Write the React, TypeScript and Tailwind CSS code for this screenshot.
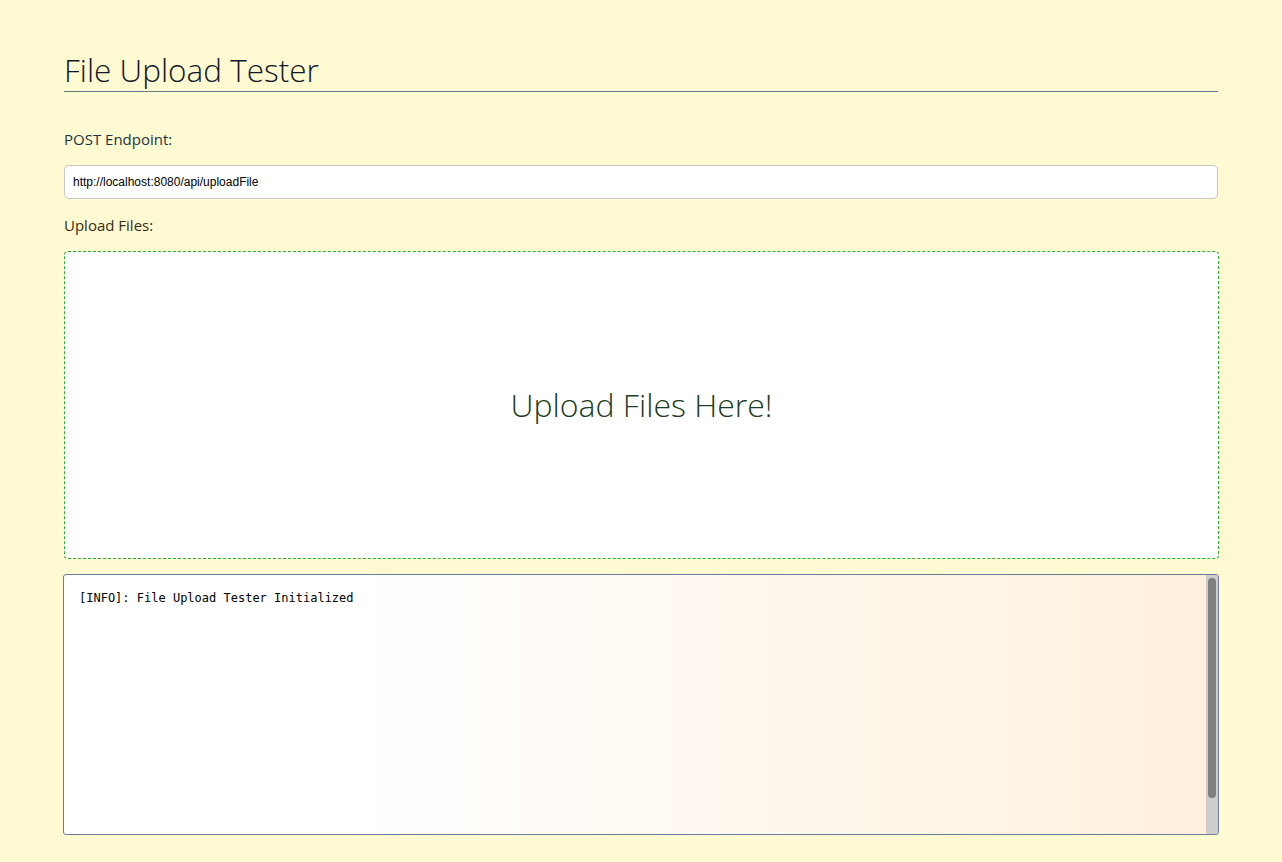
export default function App() {
  return (
    <div className="min-h-[862px] bg-[#fffad2] px-16 pt-[50px] pb-7 font-['Open_Sans',sans-serif]">
      <h1 className="border-b border-[#6b7280] pb-[1px] text-[31.5px] font-light leading-[40px] text-[#111827]">
        File Upload Tester
      </h1>

      <label className="mt-[37px] block text-[15px] leading-5 text-[#1c3442]">
        POST Endpoint:
      </label>
      <input
        className="mt-[16px] block h-[34px] w-full rounded-[5px] border border-[#c8c8c8] bg-white px-[8px] font-['Liberation_Sans',sans-serif] text-[12px] text-black outline-none"
        defaultValue="http://localhost:8080/api/uploadFile"
      />

      <label className="mt-[16px] block text-[15px] leading-5 text-[#3a2a14]">
        Upload Files:
      </label>

      <div className="mt-[16px] flex h-[308px] w-[1155px] items-center justify-center rounded-[4px] border border-dashed border-[#22b422] bg-white">
        <span className="text-[32px] font-light text-[#1d3d22]">Upload Files Here!</span>
      </div>

      <div className="mt-[15px] ml-[-1px] flex h-[261px] w-[1156px] overflow-hidden rounded-[3px] border border-[#6b7b99] bg-gradient-to-r from-white from-25% to-[#fff0dc]">
        <div className="flex-1 px-[15px] py-[15px] font-['DejaVu_Sans_Mono',monospace] text-[12px] leading-[16px] text-black">
          [INFO]: File Upload Tester Initialized
        </div>
        <div className="w-[12px] bg-[#cdcdcd] px-[2px] pt-[3px]">
          <div className="h-[220px] rounded-full bg-[#808080]" />
        </div>
      </div>
    </div>
  );
}
